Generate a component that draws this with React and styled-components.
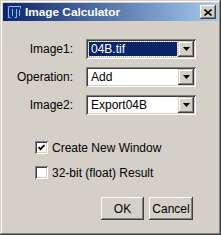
import React from 'react';
import styled, { createGlobalStyle } from 'styled-components';

const Global = createGlobalStyle`
   html, body {
      margin: 0;
      padding: 0;
      background: #d4d0c8;
   }
   body {
      font-family: "Liberation Sans", Arial, sans-serif;
      font-size: 12px;
      color: #000;
   }
`;

const Window = styled.div`
   width: 221px;
   height: 235px;
   box-sizing: border-box;
   background: #d4d0c8;
   padding: 3px;
   box-shadow:
      inset -1px -1px 0 #404040,
      inset 1px 1px 0 #d4d0c8,
      inset -2px -2px 0 #808080,
      inset 2px 2px 0 #ffffff;
   display: flex;
   flex-direction: column;
`;

const TitleBar = styled.div`
   height: 18px;
   display: flex;
   align-items: center;
   padding: 0 2px 0 4px;
   background: linear-gradient(to right, #0a246a, #a6caf0);
   color: #fff;
   font-weight: bold;
   font-size: 11.8px;
   gap: 3px;
`;

const TitleText = styled.span`
   flex: 1;
`;

const CloseBtn = styled.div`
   width: 16px;
   height: 14px;
   box-sizing: border-box;
   background: #d4d0c8;
   box-shadow:
      inset -1px -1px 0 #404040,
      inset 1px 1px 0 #ffffff,
      inset -2px -2px 0 #808080;
   display: flex;
   align-items: center;
   justify-content: center;
`;

const Form = styled.div`
   display: grid;
   grid-template-columns: 70px 110px;
   column-gap: 13px;
   row-gap: 8px;
   margin-top: 18px;
   align-items: center;
`;

const Label = styled.label`
   text-align: right;
`;

const Combo = styled.div`
   height: 20px;
   box-sizing: border-box;
   background: #fff;
   padding: 2px;
   display: flex;
   box-shadow:
      inset 1px 1px 0 #808080,
      inset -1px -1px 0 #ffffff,
      inset 2px 2px 0 #404040,
      inset -2px -2px 0 #d4d0c8;
`;

const ComboValue = styled.div`
   flex: 1;
   display: flex;
   align-items: center;
   padding-left: 2px;
   margin: 1px;
   background: ${p => (p.selected ? '#0a246a' : 'transparent')};
   color: ${p => (p.selected ? '#fff' : '#000')};
   outline: ${p => (p.selected ? '1px dotted #c0c0c0' : 'none')};
   font-size: 12px;
`;

const ArrowBtn = styled.div`
   width: 16px;
   background: #d4d0c8;
   box-shadow:
      inset -1px -1px 0 #404040,
      inset 1px 1px 0 #d4d0c8,
      inset -2px -2px 0 #808080,
      inset 2px 2px 0 #ffffff;
   display: flex;
   align-items: center;
   justify-content: center;
`;

const Checks = styled.div`
   display: flex;
   flex-direction: column;
   gap: 12px;
   margin: 26px 0 0 32px;
`;

const CheckRow = styled.div`
   display: flex;
   align-items: center;
   gap: 4px;
   height: 13px;
`;

const Box = styled.div`
   width: 13px;
   height: 13px;
   box-sizing: border-box;
   background: #fff;
   box-shadow:
      inset 1px 1px 0 #808080,
      inset -1px -1px 0 #ffffff,
      inset 2px 2px 0 #404040,
      inset -2px -2px 0 #d4d0c8;
   display: flex;
   align-items: center;
   justify-content: center;
`;

const Buttons = styled.div`
   display: flex;
   justify-content: flex-end;
   gap: 5px;
   margin-top: 18px;
   padding-right: 25px;
`;

const Button = styled.div`
   width: ${p => p.w}px;
   height: 23px;
   box-sizing: border-box;
   background: #d4d0c8;
   box-shadow:
      inset -1px -1px 0 #404040,
      inset 1px 1px 0 #ffffff,
      inset -2px -2px 0 #808080;
   display: flex;
   align-items: center;
   justify-content: center;
   font-size: 12px;
`;

const Arrow = () => (
   <svg width="7" height="4" viewBox="0 0 7 4">
      <path d="M0 0h7L3.5 4z" fill="#000" />
   </svg>
);

const IJIcon = () => (
   <svg width="15" height="14" viewBox="0 0 15 14">
      <rect x="0" y="0" width="15" height="14" fill="#16347e" />
      <g fill="none" stroke="#8fb4e8" strokeWidth="1">
         <path d="M1.5 2v10.5h2" />
         <path d="M1.5 1.5h12v2" />
         <path d="M5.5 4v7" />
         <path d="M9.5 4v8.5h-2" />
         <path d="M12.5 5v6" />
      </g>
   </svg>
);

const CloseX = () => (
   <svg width="8" height="7" viewBox="0 0 8 7">
      <path d="M0.5 0.5l7 6M7.5 0.5l-7 6" stroke="#000" strokeWidth="1.6" />
   </svg>
);

const Check = () => (
   <svg width="7" height="7" viewBox="0 0 7 7">
      <path d="M0.5 3l2 2.2L6.5 1" stroke="#000" strokeWidth="1.7" fill="none" />
   </svg>
);

const Select = ({ value, selected }) => (
   <Combo>
      <ComboValue selected={selected}>{value}</ComboValue>
      <ArrowBtn><Arrow /></ArrowBtn>
   </Combo>
);

export default function App() {
   return (
      <>
         <Global />
         <Window>
            <TitleBar>
               <IJIcon />
               <TitleText>Image Calculator</TitleText>
               <CloseBtn><CloseX /></CloseBtn>
            </TitleBar>

            <Form>
               <Label>Image1:</Label>
               <Select value="04B.tif" selected />
               <Label>Operation:</Label>
               <Select value="Add" />
               <Label>Image2:</Label>
               <Select value="Export04B" />
            </Form>

            <Checks>
               <CheckRow>
                  <Box><Check /></Box>
                  <span>Create New Window</span>
               </CheckRow>
               <CheckRow>
                  <Box />
                  <span>32-bit (float) Result</span>
               </CheckRow>
            </Checks>

            <Buttons>
               <Button w={43}>OK</Button>
               <Button w={44}>Cancel</Button>
            </Buttons>
         </Window>
      </>
   );
}
